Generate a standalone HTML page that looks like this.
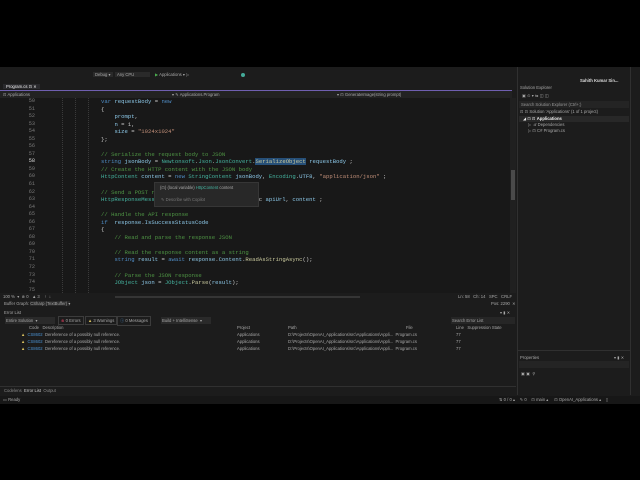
<!DOCTYPE html>
<html><head><style>
*{margin:0;padding:0;box-sizing:border-box}
body{width:640px;height:480px;background:#000;position:relative;overflow:hidden;font-family:"Liberation Sans",sans-serif;color:#aaa}
.a{position:absolute;white-space:pre}
.s{font-size:4.2px;color:#a8a8a8}
.c{font-family:"Liberation Mono",monospace;font-size:5.6px;color:#c8c8c8}
.n{font-family:"Liberation Mono",monospace;font-size:5.2px;color:#7a7a7a;text-align:right;width:12px}
.k{color:#4f8cc4}.cm{color:#4e9444}.t{color:#45b4a0}.st{color:#c08e78}.v{color:#8cc8e8}.m{color:#c8c89c}
</style></head><body>
<div class="a" style="left:0;top:67px;width:640px;height:337px;background:#1c1c1c"></div>
<div class="a s" style="left:93px;top:72px;background:#2a2a2a;padding:0 2px">Debug ▾</div>
<div class="a s" style="left:115px;top:72px;background:#2a2a2a;padding:0 2px;width:35px">Any CPU</div>
<div class="a s" style="left:155px;top:72px;color:#4caf50">▶ <span style="color:#a8a8a8">Applications ▾ ▷</span></div>
<div class="a s" style="left:580px;top:78px;color:#ddd;font-weight:bold">Sahith Kumar Sin...</div>
<div class="a" style="left:241px;top:73px;width:4px;height:4px;border-radius:2px;background:#4a9"></div>
<div class="a s" style="left:3px;top:84px;color:#eee;background:#2a2a2d;padding:0 3px">Program.cs ⊡ ✕</div>
<div class="a" style="left:0;top:90px;width:512px;height:1px;background:#6f5fb0"></div>
<div class="a" style="left:0;top:91px;width:512px;height:7px;background:#222"></div>
<div class="a s" style="left:3px;top:92px">⊡ Applications</div>
<div class="a s" style="left:172px;top:92px">▾ ✎ Applications.Program</div>
<div class="a s" style="left:337px;top:92px">▾ ⊡ GenerateImage(string prompt)</div>
<div class="a" style="left:0;top:98px;width:510px;height:195px;background:#181818"></div>
<div class="a" style="left:510px;top:98px;width:6px;height:195px;background:#202020"></div>
<div class="a" style="left:511px;top:170px;width:4px;height:30px;background:#4a4a4a"></div>
<div class="a" style="left:62px;top:98px;width:0;height:195px;border-left:1px dotted #3a3a3a"></div>
<div class="a" style="left:75px;top:98px;width:0;height:195px;border-left:1px dotted #3a3a3a"></div>
<div class="a" style="left:88px;top:98px;width:0;height:195px;border-left:1px dotted #3a3a3a"></div>
<div class="a n" style="left:23px;top:98px;line-height:7.55px">50
51
52
53
54
55
56
57
<span style="color:#ddd">58</span>
59
60
61
62
63
64
65
66
67
68
69
70
71
72
73
74
75</div>
<div class="a c" style="left:101px;top:98px;line-height:7.55px"><span class="k">var</span> <span class="v">requestBody</span> = <span class="k">new</span>
{
    <span class="v">prompt</span>,
    <span class="v">n</span> = 1,
    <span class="v">size</span> = <span class="st">"1024x1024"</span>
};

<span class="cm">// Serialize the request body to JSON</span>
<span class="k">string</span> <span class="v">jsonBody</span> = <span class="t">Newtonsoft</span>.<span class="t">Json</span>.<span class="t">JsonConvert</span>.<span class="m" style="background:#264f78">SerializeObject</span> <span class="v">requestBody</span> ;
<span class="cm">// Create the HTTP content with the JSON body</span>
<span class="t">HttpContent</span> <span class="v">content</span> = <span class="k">new</span> <span class="t">StringContent</span> <span class="v">jsonBody</span>, <span class="t">Encoding</span>.<span class="v">UTF8</span>, <span class="st">"application/json"</span> ;

<span class="cm">// Send a POST r</span>
<span class="t">HttpResponseMess</span>                          tAsync <span class="v">apiUrl</span>, <span class="v">content</span> ;

<span class="cm">// Handle the API response</span>
<span class="k">if</span>  <span class="v">response</span>.<span class="v">IsSuccessStatusCode</span>
{
    <span class="cm">// Read and parse the response JSON</span>

    <span class="cm">// Read the response content as a string</span>
    <span class="k">string</span> <span class="v">result</span> = <span class="k">await</span> <span class="v">response</span>.<span class="v">Content</span>.<span class="m">ReadAsStringAsync</span>();

    <span class="cm">// Parse the JSON response</span>
    <span class="t">JObject</span> <span class="v">json</span> = <span class="t">JObject</span>.<span class="m">Parse</span>(<span class="v">result</span>);
</div>
<div class="a" style="left:154px;top:182px;width:105px;height:25px;background:#282828;border:1px solid #363636"></div>
<div class="a s" style="left:160px;top:185px">{⊡} (local variable) <span style="color:#45b4a0">HttpContent</span> content</div>
<div class="a s" style="left:161px;top:197px;color:#777">✎ Describe with Copilot</div>
<div class="a" style="left:0;top:293px;width:516px;height:16px;background:#1c1c1c"></div>
<div class="a s" style="left:3px;top:294px">100 %  ▾  ⊗ 0   ▲ 3    ↑  ↓</div>
<div class="a" style="left:115px;top:296px;width:245px;height:2px;background:#353535"></div>
<div class="a s" style="left:458px;top:294px">Ln: 58   Ch: 14   SPC   CRLF</div>
<div class="a s" style="left:4px;top:301px">Buffer Graph: <span style="background:#2a2a2a">CSharp (TextBuffer) ▾</span></div>
<div class="a s" style="left:491px;top:301px">Pos: 2290  ✕</div>
<div class="a s" style="left:4px;top:310px">Error List</div>
<div class="a s" style="left:500px;top:310px">▾ ▮ ✕</div>
<div class="a s" style="left:5px;top:317px;background:#2a2a2a;width:50px;padding:1px">Entire Solution  ▾</div>
<div class="a s" style="left:58px;top:316px;border:1px solid #3c3c3c;padding:1px 2px"><span style="color:#e04060">⊗</span> 0 Errors</div>
<div class="a s" style="left:85px;top:316px;border:1px solid #3c3c3c;padding:1px 2px"><span style="color:#d8c060">▲</span> 3 Warnings</div>
<div class="a s" style="left:117px;top:316px;border:1px solid #3c3c3c;padding:1px 2px"><span style="color:#4a90d0">ⓘ</span> 0 Messages</div>
<div class="a s" style="left:161px;top:317px;background:#2a2a2a;width:50px;padding:1px">Build + IntelliSense  ▾</div>
<div class="a s" style="left:451px;top:317px;background:#262626;width:64px;padding:1px">Search Error List</div>
<div class="a s" style="left:29px;top:325px">Code   Description</div>
<div class="a s" style="left:237px;top:325px">Project</div>
<div class="a s" style="left:288px;top:325px">Path</div>
<div class="a s" style="left:406px;top:325px">File</div>
<div class="a s" style="left:456px;top:325px">Line   Suppression State</div>
<div class="a s" style="left:21px;top:332px;line-height:6.8px"><span style="color:#d8c060">▲</span>  <span style="color:#4a90d0">CS8602</span>  Dereference of a possibly null reference.
<span style="color:#d8c060">▲</span>  <span style="color:#4a90d0">CS8602</span>  Dereference of a possibly null reference.
<span style="color:#d8c060">▲</span>  <span style="color:#4a90d0">CS8602</span>  Dereference of a possibly null reference.</div>
<div class="a s" style="left:237px;top:332px;line-height:6.8px">Applications
Applications
Applications</div>
<div class="a s" style="left:288px;top:332px;line-height:6.8px">D:\Projects\OpenAI_Applications\src\Applications\Appli...  Program.cs
D:\Projects\OpenAI_Applications\src\Applications\Appli...  Program.cs
D:\Projects\OpenAI_Applications\src\Applications\Appli...  Program.cs</div>
<div class="a s" style="left:456px;top:332px;line-height:6.8px">77
77
77</div>
<div class="a" style="left:0;top:386px;width:516px;height:1px;background:#303030"></div>
<div class="a s" style="left:4px;top:388px;color:#888">Codelens  <span style="color:#ccc">Error List</span>  Output</div>
<div class="a" style="left:517px;top:67px;width:1px;height:328px;background:#303030"></div>
<div class="a s" style="left:520px;top:85px">Solution Explorer</div>
<div class="a s" style="left:522px;top:93px">▣ ⊙ ▾ ⇆ ◫ ◫</div>
<div class="a" style="left:519px;top:101px;width:110px;height:7px;background:#242424"></div>
<div class="a s" style="left:521px;top:102px;color:#999">Search Solution Explorer (Ctrl+;)</div>
<div class="a s" style="left:520px;top:109px">⊡ ⊡ Solution 'Applications' (1 of 1 project)</div>
<div class="a" style="left:519px;top:116px;width:110px;height:6px;background:#282828"></div>
<div class="a s" style="left:523px;top:116px;color:#eee">◢ ⊡ ⊡ <b>Applications</b></div>
<div class="a s" style="left:528px;top:122px">▷  ⅆ Dependencies</div>
<div class="a s" style="left:528px;top:128px">▷ ⊡ C# Program.cs</div>
<div class="a" style="left:630px;top:67px;width:1px;height:328px;background:#303030"></div>
<div class="a" style="left:517px;top:350px;width:113px;height:1px;background:#303030"></div>
<div class="a s" style="left:520px;top:355px">Properties</div>
<div class="a s" style="left:614px;top:355px">▾ ▮ ✕</div>
<div class="a" style="left:519px;top:361px;width:110px;height:7px;background:#242424"></div>
<div class="a s" style="left:521px;top:371px">▣ ▣  ⚲</div>
<div class="a" style="left:0;top:396px;width:640px;height:8px;background:#171717"></div>
<div class="a s" style="left:3px;top:397px">▭ Ready</div>
<div class="a s" style="left:499px;top:397px">⇅ 0 / 0 ▴    ✎ 0    ⊡ main ▴     ⊡ OpenAI_Applications ▴    ▯</div>
</body></html>
